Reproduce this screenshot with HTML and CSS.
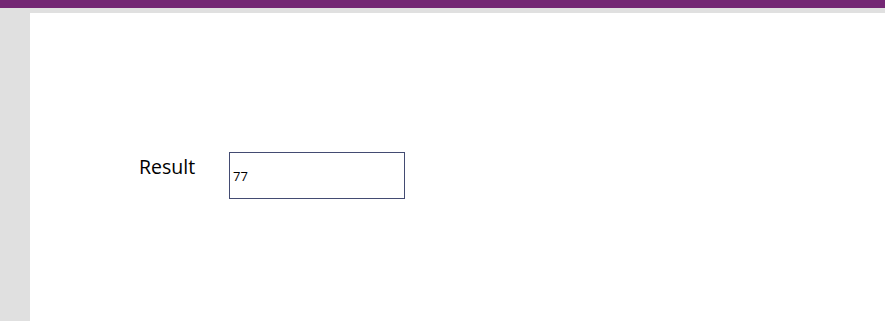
FILE: index.html
```html
<!DOCTYPE html>
<html lang="en">
<head>
    <meta charset="UTF-8">
    <title>Result</title>
    <link rel="stylesheet" href="styles.css">
</head>
<body>
    <div class="top-bar"></div>
    <div class="stage">
        <div class="canvas">
            <div class="field-row">
                <label class="field-label" for="result">Result</label>
                <div class="field-box" id="result">77</div>
            </div>
        </div>
    </div>
</body>
</html>
```

FILE: styles.css
```css
html, body {
    height: 100%;
}
body {
    margin: 0;
    font-family: "Open Sans", "Noto Sans", sans-serif;
    background-color: #e0e0e0;
    color: #000;
    overflow: hidden;
    display: flex;
    flex-direction: column;
}
.top-bar {
    height: 8px;
    background-color: #742774;
}
.stage {
    flex: 1;
    display: flex;
    padding: 5px 0 0 30px;
}
.canvas {
    flex: 1;
    background-color: #fff;
    padding: 139px 0 0 109px;
}
.field-row {
    display: flex;
    align-items: flex-start;
}
.field-label {
    width: 90px;
    padding-top: 2px;
    font-size: 19.5px;
    line-height: 26px;
}
.field-box {
    box-sizing: border-box;
    width: 176px;
    height: 47px;
    border: 1px solid #434b72;
    padding: 0 3px;
    font-size: 13px;
    display: flex;
    align-items: center;
}
```
